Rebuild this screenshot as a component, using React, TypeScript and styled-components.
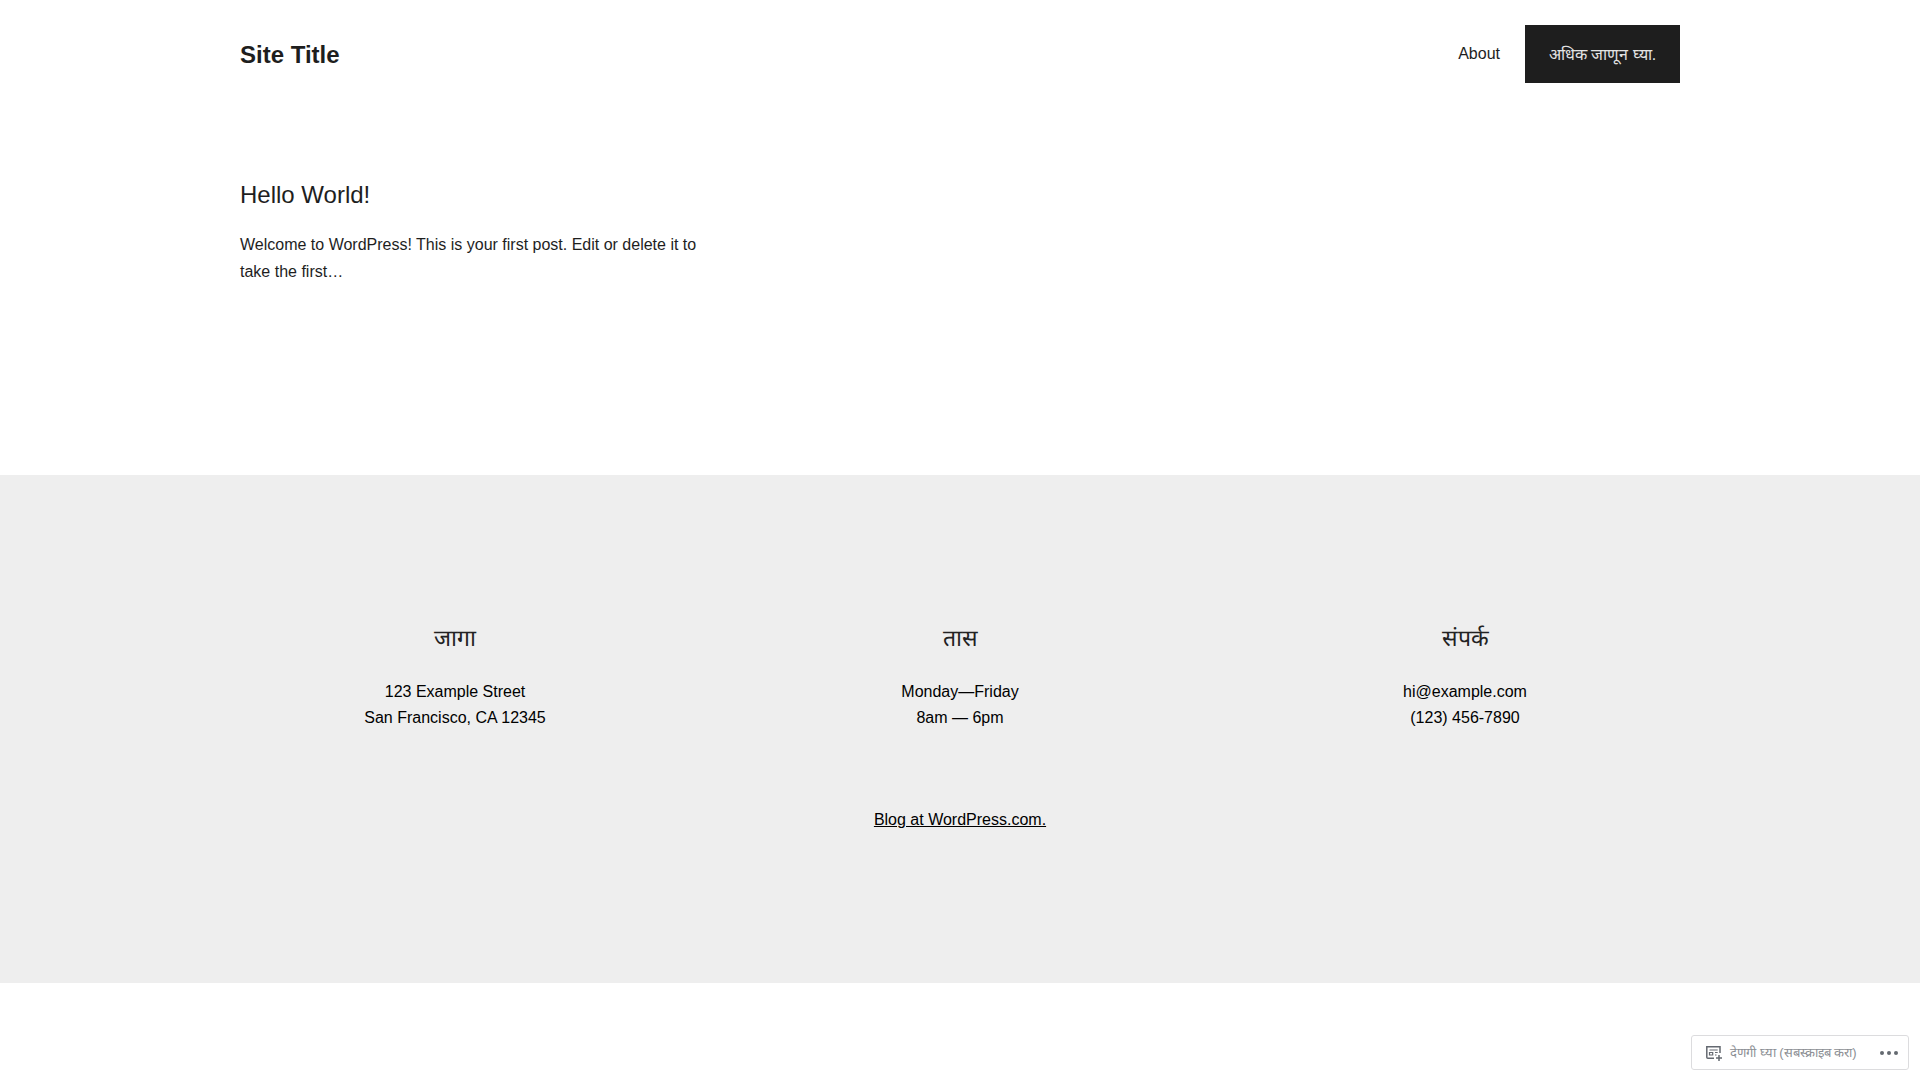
import React from "react";
import styled, { createGlobalStyle } from "styled-components";

const GlobalStyle = createGlobalStyle`
  html, body {
    margin: 0;
    padding: 0;
    background: #fff;
    font-family: "Liberation Sans", sans-serif;
    color: #1e1e1e;
  }
`;

const Header = styled.header`
  box-sizing: border-box;
  width: 1440px;
  height: 108px;
  margin: 0 auto;
  padding-top: 1px;
  display: flex;
  align-items: center;
  justify-content: space-between;
`;

const SiteTitle = styled.a`
  font-size: 24px;
  font-weight: 700;
  color: #1e1e1e;
`;

const Nav = styled.nav`
  display: flex;
  align-items: center;
  gap: 25px;
  margin-top: -1px;
`;

const NavLink = styled.a`
  font-size: 16px;
  color: #1e1e1e;
`;

const NavButton = styled.a`
  display: flex;
  align-items: center;
  justify-content: center;
  width: 155px;
  height: 58px;
  background: #1e1e1e;
  color: #e4e4e4;
  font-size: 16px;
`;

const Main = styled.main`
  box-sizing: border-box;
  width: 1440px;
  height: 367px;
  margin: 0 auto;
  padding-top: 72px;
`;

const PostTitle = styled.h2`
  margin: 0 0 21px;
  font-size: 24px;
  font-weight: 400;
  line-height: 30px;
`;

const Excerpt = styled.p`
  margin: 0;
  width: 480px;
  font-size: 16px;
  line-height: 27px;
`;

const Footer = styled.footer`
  box-sizing: border-box;
  height: 508px;
  background: #eeeeee;
  padding-top: 144px;
  color: #000;
`;

const Columns = styled.div`
  width: 1440px;
  margin: 0 auto;
  display: grid;
  grid-template-columns: repeat(3, 1fr);
  column-gap: 75px;
`;

const Column = styled.div`
  text-align: center;
`;

const ColumnTitle = styled.h3`
  margin: 1px 0 23px;
  font-size: 23px;
  font-weight: 400;
  line-height: 36px;
  color: #222;
`;

const ColumnText = styled.p`
  margin: 0;
  font-size: 16px;
  line-height: 26px;
`;

const Credit = styled.p`
  margin: 76px 0 0;
  text-align: center;
  font-size: 16px;
  line-height: 26px;

  a {
    color: #000;
    text-decoration: underline;
  }
`;

const SubscribeBar = styled.div`
  position: fixed;
  right: 11px;
  bottom: 10px;
  box-sizing: border-box;
  width: 218px;
  height: 35px;
  display: flex;
  align-items: center;
  background: #fff;
  border: 1px solid #dcdcde;
  border-radius: 3px;
  padding: 0 10px 0 13px;
`;

const SubscribeLabel = styled.span`
  flex: 1;
  margin-left: 7px;
  padding-bottom: 2px;
  font-size: 13px;
  color: #8c8f94;
  white-space: nowrap;
`;

const ReaderIcon = () => (
  <svg width="18" height="18" viewBox="0 0 18 18" fill="none" stroke="#646970" strokeWidth="1.5">
    <path d="M15 9V2.8H1.8v10.4c0 .6.4 1 1 1H9" />
    <path d="M4.5 6h8.2M4.5 8.5h3.2v2.5H4.5zM10 8.5h2.7M10 11h1.5" strokeWidth="1.2" />
    <path d="M14 11v6M11 14h6" />
  </svg>
);

const MoreIcon = () => (
  <svg width="18" height="4" viewBox="0 0 18 4" fill="#646970">
    <circle cx="2" cy="2" r="2" />
    <circle cx="9" cy="2" r="2" />
    <circle cx="16" cy="2" r="2" />
  </svg>
);

const App: React.FC = () => (
  <>
    <GlobalStyle />
    <Header>
      <SiteTitle>Site Title</SiteTitle>
      <Nav>
        <NavLink>About</NavLink>
        <NavButton>अधिक जाणून घ्या.</NavButton>
      </Nav>
    </Header>
    <Main>
      <PostTitle>Hello World!</PostTitle>
      <Excerpt>Welcome to WordPress! This is your first post. Edit or delete it to take the first…</Excerpt>
    </Main>
    <Footer>
      <Columns>
        <Column>
          <ColumnTitle>जागा</ColumnTitle>
          <ColumnText>123 Example Street<br />San Francisco, CA 12345</ColumnText>
        </Column>
        <Column>
          <ColumnTitle>तास</ColumnTitle>
          <ColumnText>Monday—Friday<br />8am — 6pm</ColumnText>
        </Column>
        <Column>
          <ColumnTitle>संपर्क</ColumnTitle>
          <ColumnText>hi@example.com<br />(123) 456-7890</ColumnText>
        </Column>
      </Columns>
      <Credit><a>Blog at WordPress.com.</a></Credit>
    </Footer>
    <SubscribeBar>
      <ReaderIcon />
      <SubscribeLabel>देणगी घ्या (सबस्क्राइब करा)</SubscribeLabel>
      <MoreIcon />
    </SubscribeBar>
  </>
);

export default App;
